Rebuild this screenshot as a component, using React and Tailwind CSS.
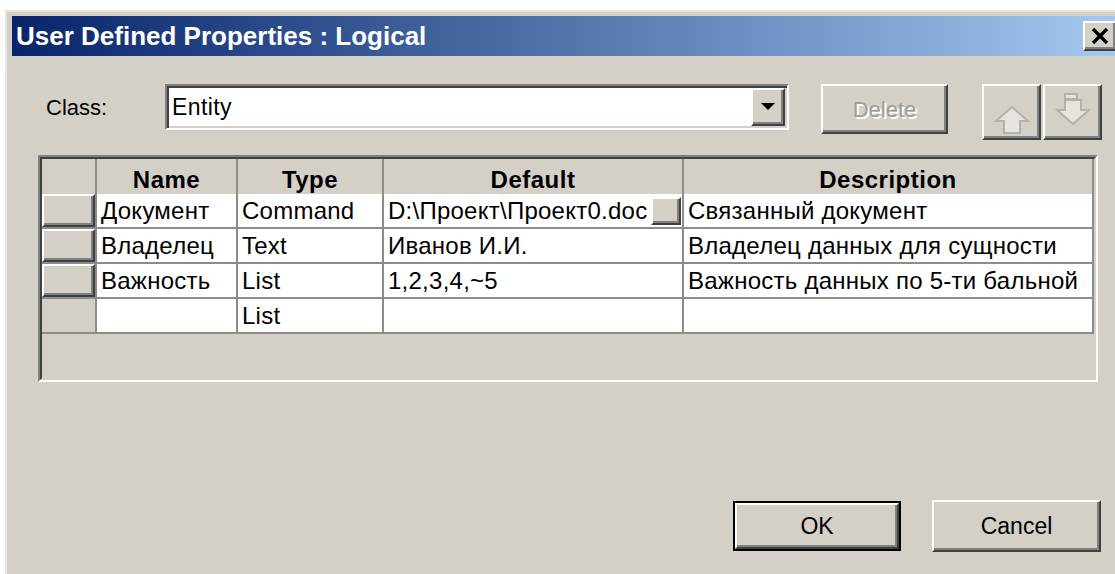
import React from "react";

const rows = [
  { name: "Документ", type: "Command", def: "D:\\Проект\\Проект0.doc", desc: "Связанный документ", browse: true, selector: true },
  { name: "Владелец", type: "Text", def: "Иванов И.И.", desc: "Владелец данных для сущности", selector: true },
  { name: "Важность", type: "List", def: "1,2,3,4,~5", desc: "Важность данных по 5-ти бальной", selector: true },
  { name: "", type: "List", def: "", desc: "", selector: false },
];

// classic raised 3D bevel
const raised =
  "bg-[#d4d0c8] border-2 border-t-white border-l-white border-b-[#404040] border-r-[#404040] shadow-[inset_-2px_-2px_0_#808080]";

const UpArrow = () => (
  <svg width="36" height="28" viewBox="0 0 36 28">
    <polygon points="18,1 34,15 26,15 26,27 10,27 10,15 2,15" fill="#e6e4df" stroke="#b4b1aa" strokeWidth="2" strokeLinejoin="miter" />
  </svg>
);

const DownArrow = () => (
  <svg width="36" height="32" viewBox="0 0 36 32">
    <polygon points="10,7 26,7 26,17 34,17 18,31 2,17 10,17" fill="#e6e4df" stroke="#b4b1aa" strokeWidth="2" />
    <rect x="10" y="1" width="12" height="5" fill="#e6e4df" stroke="#b4b1aa" strokeWidth="2" />
  </svg>
);

const Cell = ({ children, className = "" }) => (
  <div className={"bg-white flex items-center pl-[4px] overflow-hidden whitespace-nowrap " + className}>{children}</div>
);

export default function App() {
  return (
    <div
      className="w-[1115px] h-[574px] bg-white overflow-hidden pt-[10px] pl-[5px] text-black"
      style={{ fontFamily: '"Liberation Sans", Arial, sans-serif' }}
    >
      <div className="w-[1124px] h-[600px] bg-[#d4d0c8] border-t-2 border-l-2 border-[#e7e4de] px-[5px] pt-[4px] flex flex-col">
        {/* title bar */}
        <div className="h-[40px] bg-linear-to-r from-[#0a246a] to-[#a6caf0] flex items-center justify-between">
          <span className="pl-[4px] text-white font-bold text-[26px] leading-none">
            User Defined Properties : Logical
          </span>
          <div className={raised + " w-[34px] h-[30px] mr-[7px] flex items-center justify-center"}>
            <svg width="18" height="16" viewBox="0 0 18 16">
              <path d="M2 1 L16 15 M16 1 L2 15" stroke="#000" strokeWidth="3.5" />
            </svg>
          </div>
        </div>

        <div className="flex flex-col pl-[26px] pt-[28px]">
          {/* class selector row */}
          <div className="flex items-start h-[56px]">
            <div className="w-[127px] h-[46px] flex items-center pl-[8px] text-[22px]">Class:</div>
            <div className="w-[624px] h-[46px] bg-white border-2 border-t-[#808080] border-l-[#808080] border-b-white border-r-white shadow-[inset_2px_2px_0_#404040,inset_-2px_-2px_0_#d4d0c8] flex items-stretch p-[2px]">
              <div className="flex-1 flex items-center pl-[3px] text-[23px] tracking-[0.4px]">Entity</div>
              <div className={raised + " w-[34px] flex items-center justify-center"}>
                <svg width="14" height="8" viewBox="0 0 14 8">
                  <polygon points="0,0 14,0 7,7" fill="#000" />
                </svg>
              </div>
            </div>
            <div className={raised + " ml-[32px] w-[127px] h-[50px] flex items-center justify-center text-[22px] text-[#a09d96] [text-shadow:2px_2px_0_#fff]"}>
              Delete
            </div>
            <div className="ml-[34px] flex gap-[2px]">
              <div className={raised + " w-[59px] h-[56px] flex items-end justify-center pb-[4px]"}>
                <UpArrow />
              </div>
              <div className={raised + " w-[59px] h-[56px] flex items-center justify-center pb-[6px]"}>
                <DownArrow />
              </div>
            </div>
          </div>

          {/* properties grid */}
          <div className="mt-[15px] w-[1060px] h-[227px] border-2 border-t-[#808080] border-l-[#808080] border-b-white border-r-white">
            <div className="w-full h-full border-2 border-t-[#404040] border-l-[#404040] border-b-[#d4d0c8] border-r-[#d4d0c8] flex flex-col">
              <div className="grid grid-cols-[53px_139px_144px_298px_408px] auto-rows-[33px] gap-[2px] bg-[#8e8c88] pr-[2px] pb-[2px] text-[24px] tracking-[0.25px]">
                <div className="bg-[#d4d0c8] h-[41px]" />
                {["Name", "Type", "Default", "Description"].map((h) => (
                  <div key={h} className="bg-[#d4d0c8] h-[41px] flex items-center justify-center font-bold text-[24px] tracking-[0.5px]">
                    {h}
                  </div>
                ))}
                {rows.map((r, i) => (
                  <React.Fragment key={i}>
                    {r.selector ? <div className={raised} /> : <div className="bg-[#d4d0c8]" />}
                    <Cell>{r.name}</Cell>
                    <Cell>{r.type}</Cell>
                    <Cell className="justify-between pr-[1px]">
                      <span>{r.def}</span>
                      {r.browse && <div className={raised + " w-[30px] h-[28px] shrink-0"} />}
                    </Cell>
                    <Cell>{r.desc}</Cell>
                  </React.Fragment>
                ))}
              </div>
              <div className="flex-1 bg-[#d4d0c8]" />
            </div>
          </div>

          {/* dialog buttons */}
          <div className="flex items-start mt-[118px]">
            <div className="ml-[695px] mt-[1px] w-[168px] h-[50px] border-2 border-black">
              <div className={raised + " w-full h-full flex items-center justify-center text-[23px]"}>OK</div>
            </div>
            <div className={raised + " ml-[31px] w-[169px] h-[52px] flex items-center justify-center text-[23px]"}>
              Cancel
            </div>
          </div>
        </div>
      </div>
    </div>
  );
}
